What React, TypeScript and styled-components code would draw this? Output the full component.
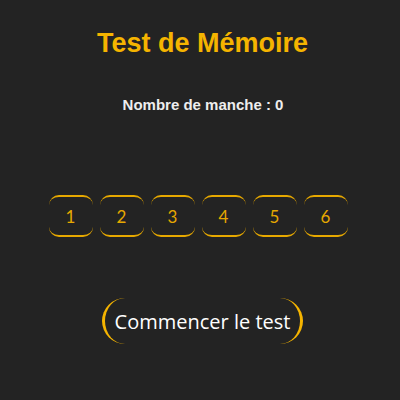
import React from "react";
import styled, { createGlobalStyle } from "styled-components";

const Global = createGlobalStyle`
  html, body { margin: 0; padding: 0; background: #232323; }
  body { width: 400px; height: 400px; overflow: hidden; }
`;

const Page = styled.div`
  width: 400px;
  height: 400px;
  background: #232323;
  display: flex;
  flex-direction: column;
  align-items: center;
  font-family: "Liberation Sans", Arial, sans-serif;
`;

const Title = styled.h1`
  margin: 27px 0 0 5px;
  font-size: 27px;
  font-weight: bold;
  color: #f5b400;
  line-height: 32px;
`;

const Rounds = styled.p`
  margin: 37px 0 0 6px;
  font-size: 15px;
  font-weight: bold;
  color: #eeeeee;
  line-height: 18px;
`;

const Row = styled.div`
  display: flex;
  margin-top: 81px;
  padding-left: 3px;
`;

const Cell = styled.div`
  width: 44px;
  height: 38px;
  margin-right: 7px;
  box-sizing: content-box;
  border-top: 2px solid #e6a800;
  border-bottom: 2px solid #e6a800;
  border-radius: 10px;
  display: flex;
  align-items: center;
  justify-content: center;
  color: #e6a800;
  font-family: Lato, sans-serif;
  font-weight: 400;
  font-size: 17px;
`;

const StartButton = styled.button`
  margin-top: 61px;
  margin-left: 5px;
  width: 201px;
  height: 46px;
  background: transparent;
  border: none;
  border-left: 3px solid #f5b400;
  border-right: 3px solid #f5b400;
  border-radius: 24px;
  color: #ffffff;
  font-family: "Open Sans", sans-serif;
  font-size: 20px;
  padding: 0;
  cursor: pointer;
`;

export default function App() {
  return (
    <>
      <Global />
      <Page>
        <Title>Test de Mémoire</Title>
        <Rounds>Nombre de manche : 0</Rounds>
        <Row>
          {[1, 2, 3, 4, 5, 6].map((n) => (
            <Cell key={n}>{n}</Cell>
          ))}
        </Row>
        <StartButton>Commencer le test</StartButton>
      </Page>
    </>
  );
}
